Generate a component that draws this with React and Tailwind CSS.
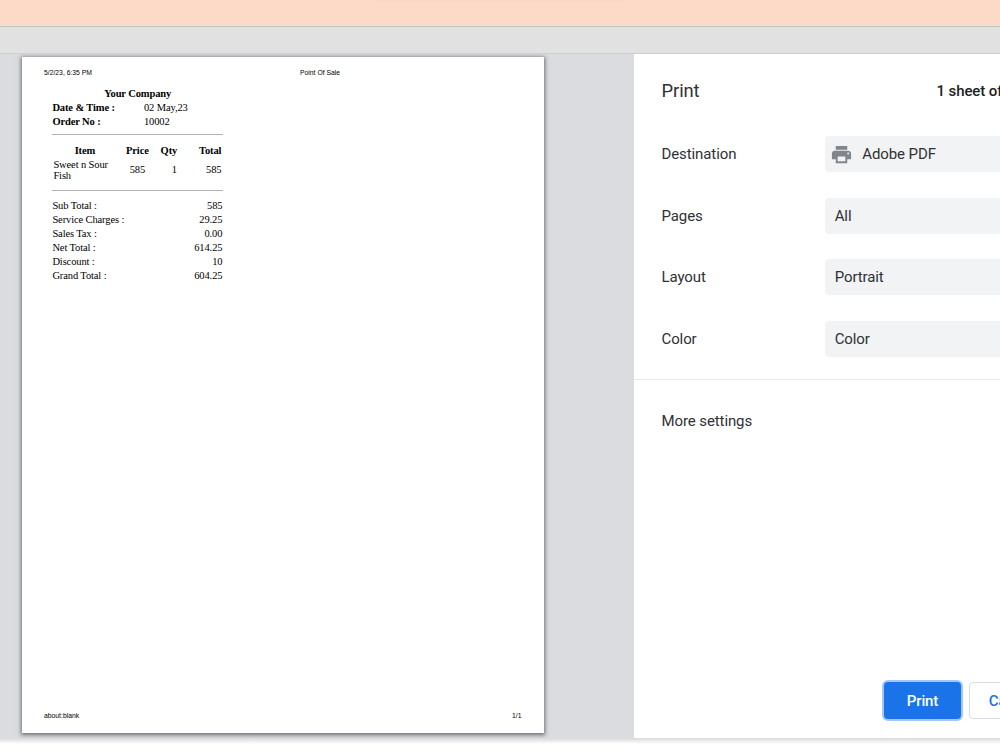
import React from 'react';

const totals = [
    { label: 'Sub Total :', value: '585' },
    { label: 'Service Charges :', value: '29.25' },
    { label: 'Sales Tax :', value: '0.00' },
    { label: 'Net Total :', value: '614.25' },
    { label: 'Discount :', value: '10' },
    { label: 'Grand Total :', value: '604.25' },
];

const settings = [
    { label: 'Destination', value: 'Adobe PDF', icon: true },
    { label: 'Pages', value: 'All' },
    { label: 'Layout', value: 'Portrait' },
    { label: 'Color', value: 'Color' },
];

function PrinterIcon() {
    return (
        <svg width="23" height="23" viewBox="0 0 24 24" fill="#80868b" className="mr-[9px] shrink-0">
            <path d="M19 8H5c-1.66 0-3 1.34-3 3v6h4v4h12v-4h4v-6c0-1.66-1.34-3-3-3zm-3 11H8v-5h8v5zm3-7c-.55 0-1-.45-1-1s.45-1 1-1 1 .45 1 1-.45 1-1 1zm-1-9H6v4h12V3z" />
        </svg>
    );
}

function Receipt() {
    return (
        <div className="ml-[30.4px] mt-[9.5px] w-[170.6px] font-['Liberation_Serif',serif] text-[10.5px] leading-[14px] tracking-[-0.12px]">
            <div className="text-center font-bold">Your Company</div>
            <div className="flex">
                <span className="w-[91.6px] font-bold">Date &amp; Time :</span>
                <span>02 May,23</span>
            </div>
            <div className="flex">
                <span className="w-[91.6px] font-bold">Order No :</span>
                <span>10002</span>
            </div>
            <div className="mt-[5px] h-px bg-[#b4b4b4]" />
            <div className="mt-[9px] flex font-bold">
                <span className="w-[65px] text-center">Item</span>
                <span className="w-[40px] text-center">Price</span>
                <span className="w-[23px] text-center">Qty</span>
                <span className="flex-1 pr-[1.6px] text-right">Total</span>
            </div>
            <div className="mt-[1px] flex items-center">
                <span className="w-[65px] pl-[1px] leading-[11px]">Sweet n Sour<br />Fish</span>
                <span className="w-[40px] pt-px text-center">585</span>
                <span className="w-[19.5px] pt-px text-right">1</span>
                <span className="flex-1 pr-[1.6px] pt-px text-right">585</span>
            </div>
            <div className="mt-[9px] h-px bg-[#b4b4b4]" />
            <div className="mt-2 pr-[0.6px]">
                {totals.map((row) => (
                    <div key={row.label} className="flex h-[14px] justify-between">
                        <span>{row.label}</span>
                        <span>{row.value}</span>
                    </div>
                ))}
            </div>
        </div>
    );
}

function Preview() {
    return (
        <div className="w-[634px] shrink-0 bg-[#dadce0] pl-[22px] pt-[3px]">
            <div className="flex h-[676px] w-[522px] flex-col bg-white text-black shadow-[0_1px_4px_1px_rgba(60,64,67,0.7)]">
                <div className="mt-3 flex pl-[22px] font-['Liberation_Sans',sans-serif] text-[6.8px] leading-[8px]">
                    <span className="w-[256px]">5/2/23, 6:35 PM</span>
                    <span>Point Of Sale</span>
                </div>
                <Receipt />
                <div className="mb-[13px] mt-auto flex justify-between pl-[22px] pr-[22.5px] font-['Liberation_Sans',sans-serif] text-[6.8px] leading-[8px]">
                    <span>about:blank</span>
                    <span>1/1</span>
                </div>
            </div>
        </div>
    );
}

function SettingsPanel() {
    return (
        <div className="flex flex-1 flex-col bg-white font-[Roboto,sans-serif] text-[15px] tracking-[-0.1px] text-[#303134]">
            <div className="flex h-[73px] shrink-0 items-center pl-[27.5px]">
                <h1 className="w-[275px] shrink-0 text-[18.4px]">Print</h1>
                <span className="shrink-0 whitespace-nowrap pt-px font-medium text-[#202124]">1 sheet of paper</span>
            </div>
            <div className="flex flex-col gap-[25.5px] pt-[9px]">
                {settings.map((row) => (
                    <div key={row.label} className="flex h-9 items-center pl-[27.5px]">
                        <span className="w-[163.8px] shrink-0 pt-px">{row.label}</span>
                        <div className={`flex h-9 w-[260px] shrink-0 items-center rounded bg-[#f1f3f4] ${row.icon ? 'pl-[5px]' : 'pl-[9.4px]'}`}>
                            {row.icon && <PrinterIcon />}
                            <span className="pt-px">{row.value}</span>
                        </div>
                    </div>
                ))}
            </div>
            <div className="mt-[22px] h-px shrink-0 bg-[#e8eaed]" />
            <div className="mt-[31px] pl-[27.5px] leading-5">More settings</div>
            <div className="mb-[19px] mt-auto flex gap-2 pl-[250px] font-medium">
                <button className="h-[37px] w-[77px] shrink-0 rounded bg-[#1a73e8] pt-px text-white shadow-[0_0_0_2px_#a3c7f7]">Print</button>
                <button className="h-[37px] w-[84px] shrink-0 rounded border border-[#dadce0] pl-px pt-px text-[#1a73e8]">Cancel</button>
            </div>
        </div>
    );
}

function App() {
    return (
        <div className="flex h-[750px] w-[1000px] flex-col overflow-hidden bg-white">
            <div className="h-[26px] shrink-0 bg-[#fcdac7]">
                <div className="mx-auto h-[2px] w-[250px] bg-[#f9d7c4] blur-[1px]" />
            </div>
            <div className="h-[28px] shrink-0 border-y border-t-[#c3c3c3] border-b-[#cfcfcf] bg-[#e1e1e1]" />
            <div className="flex h-[684px] shrink-0 overflow-hidden">
                <Preview />
                <SettingsPanel />
            </div>
            <div className="h-[6px] shrink-0 bg-gradient-to-b from-[#d8d8d8] to-white" />
        </div>
    );
}

export default App;
